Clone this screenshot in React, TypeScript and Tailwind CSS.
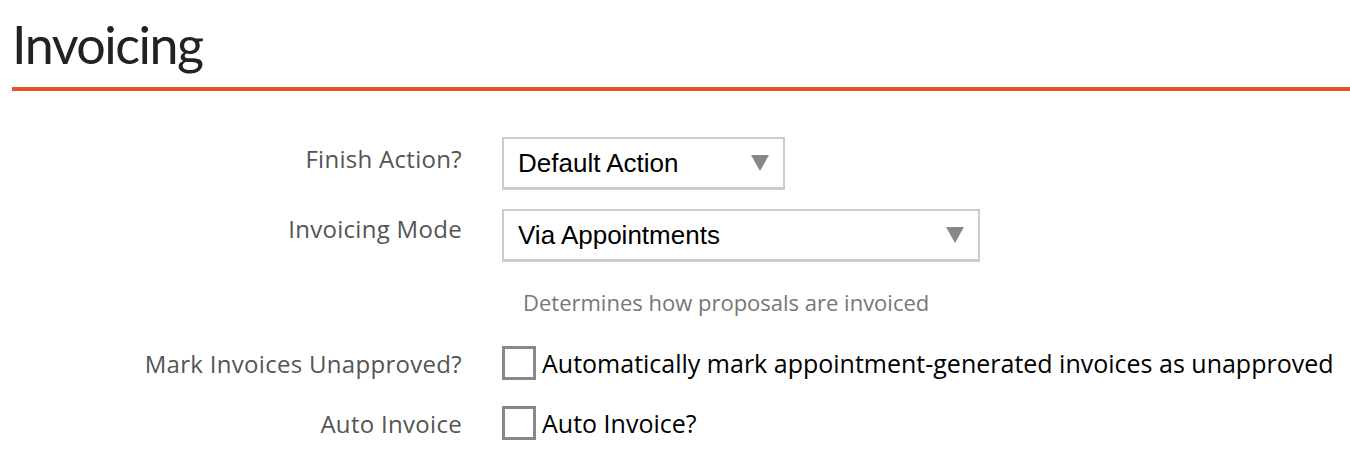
const LABEL = 'text-right text-[24px] tracking-[0.3px] text-[#555] leading-none';

function Select({ value, width }: { value: string; width: string }) {
  return (
    <div
      className={`${width} h-[53px] flex items-center justify-between border-2 border-b-[3px] border-[#ccc] bg-white pl-[14px] pr-[14px]`}
    >
      <span className="font-['Liberation_Sans',Arial,sans-serif] text-[26px] text-black leading-none">
        {value}
      </span>
      <svg width="18" height="18" viewBox="0 0 18 18" aria-hidden="true">
        <polygon points="0,1 18,1 9,17" fill="#888" />
      </svg>
    </div>
  );
}

function Checkbox({ label }: { label: string }) {
  return (
    <label className="flex items-center gap-[6px]">
      <span className="w-[34px] h-[34px] border-[3px] border-[#888] bg-white shrink-0" />
      <span className="text-[25px] text-black leading-none">{label}</span>
    </label>
  );
}

export default function App() {
  return (
    <div className="bg-white min-h-[452px] w-[1350px] font-['Open_Sans',sans-serif] overflow-hidden">
      <h1 className="pl-[12px] pt-[18px] text-[52px] leading-none text-[#222] font-['Lato',sans-serif] font-normal tracking-[-1.5px]">
        Invoicing
      </h1>
      <div className="ml-[12px] mt-[17px] h-[4px] bg-[#e4532e]" />

      <div className="grid grid-cols-[462px_1fr] gap-x-[40px] mt-[46px]">
        <div className={`${LABEL} pt-[10px]`}>Finish Action?</div>
        <div>
          <Select value="Default Action" width="w-[283px]" />
        </div>

        <div className={`${LABEL} pt-[8px] mt-[19px]`}>Invoicing Mode</div>
        <div className="mt-[19px]">
          <Select value="Via Appointments" width="w-[478px]" />
          <p className="pl-[21px] mt-[29px] text-[22px] text-[#777] leading-none">
            Determines how proposals are invoiced
          </p>
        </div>

        <div className={`${LABEL} pt-[6px] mt-[33px]`}>Mark Invoices Unapproved?</div>
        <div className="mt-[33px]">
          <Checkbox label="Automatically mark appointment-generated invoices as unapproved" />
        </div>

        <div className={`${LABEL} pt-[6px] mt-[26px]`}>Auto Invoice</div>
        <div className="mt-[26px]">
          <Checkbox label="Auto Invoice?" />
        </div>
      </div>
    </div>
  );
}
